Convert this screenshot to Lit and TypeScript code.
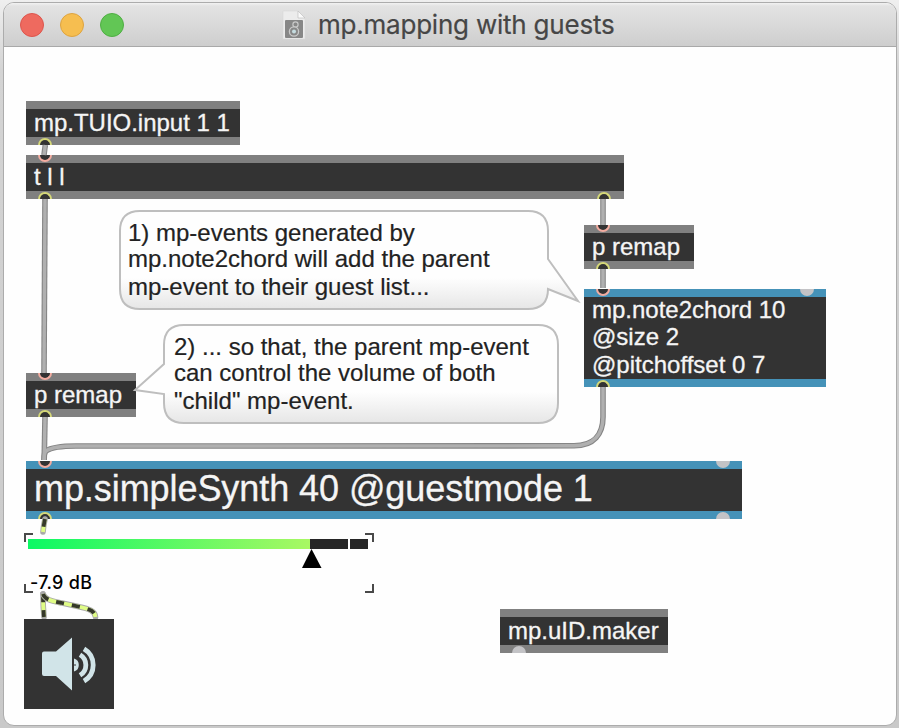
import { LitElement, html, svg, css } from "lit";
import { customElement, property } from "lit/decorators.js";
import { classMap } from "lit/directives/class-map.js";

interface Port { x: number; kind: "in" | "out" | "idle"; side: "top" | "bottom"; }
interface PatchBox {
  x: number; y: number; w: number; h: number;
  lines: string[]; tone: "gray" | "blue"; size?: "large"; ports: Port[]; spacing?: number;
}

const boxes: PatchBox[] = [
  { x: 26, y: 101, w: 214, h: 44, lines: ["mp.TUIO.input 1 1"], tone: "gray", spacing: -0.02,
    ports: [{ x: 19, kind: "out", side: "bottom" }] },
  { x: 26, y: 155, w: 598, h: 44, lines: ["t l l"], tone: "gray",
    ports: [{ x: 19, kind: "in", side: "top" }, { x: 19, kind: "out", side: "bottom" }, { x: 578, kind: "out", side: "bottom" }] },
  { x: 584, y: 225, w: 110, h: 44, lines: ["p remap"], tone: "gray",
    ports: [{ x: 19, kind: "in", side: "top" }, { x: 19, kind: "out", side: "bottom" }] },
  { x: 584, y: 289, w: 242, h: 98, lines: ["mp.note2chord 10", "@size 2", "@pitchoffset 0 7"], tone: "blue",
    ports: [{ x: 19, kind: "in", side: "top" }, { x: 223, kind: "idle", side: "top" }, { x: 19, kind: "out", side: "bottom" }] },
  { x: 26, y: 373, w: 110, h: 44, lines: ["p remap"], tone: "gray",
    ports: [{ x: 19, kind: "in", side: "top" }, { x: 19, kind: "out", side: "bottom" }] },
  { x: 26, y: 461, w: 716, h: 58, lines: ["mp.simpleSynth 40 @guestmode 1"], tone: "blue", size: "large", spacing: -0.07,
    ports: [{ x: 19, kind: "in", side: "top" }, { x: 697, kind: "idle", side: "top" },
            { x: 19, kind: "out", side: "bottom" }, { x: 697, kind: "idle", side: "bottom" }] },
  { x: 500, y: 609, w: 168, h: 44, lines: ["mp.uID.maker"], tone: "gray",
    ports: [{ x: 19, kind: "idle", side: "bottom" }] },
];

const cords = [
  "M45.3 145 L44 155",
  "M45 199 L44 373",
  "M603 199 V225",
  "M603 269 V288",
  "M603 387 V417 C603 434 594 445.800 574 445.800 L76 446 Q53 446 46 451 Q44 453 44 460",
  "M45 417 L44.2 460",
];
const signals = [
  "M45 519 Q43.6 525 43 532",
  "M43 594 Q43 606 44 617",
  "M43 594 C45 600 52 601 62 603 L78 606.500 C90 609 95 611 95.500 617",
];

@customElement("patch-box")
class PatchBoxElement extends LitElement {
  @property({ attribute: false }) box!: PatchBox;
  static styles = css`
    :host { display: block; height: 100%; }
    .box { position: relative; box-sizing: border-box; height: 100%; background: #333; color: #f5f5f5;
      border: solid #808080; border-width: 8px 0; padding: 0 0 2px 8px; display: flex; flex-direction: column;
      justify-content: center; font: 24px/27px "Liberation Sans", Arial, sans-serif; white-space: pre;
      -webkit-text-stroke: 0.3px #f5f5f5; }
    .line:not(:last-child):first-child { line-height: 26px; }
    .line:nth-child(3) { margin: 1px 0 -1px; }
    .blue { border-color: #4592b8; }
    .large { font-size: 36px; line-height: 40px; }
    .port { position: absolute; width: 14px; height: 7px; margin-left: -7px; box-sizing: border-box; background: #333; }
    .top { top: -8px; border-radius: 0 0 7px 7px; }
    .bottom { bottom: -8px; border-radius: 7px 7px 0 0; }
    .in { border: 2px solid #f3aca0; border-top: 0; }
    .out { border: 2px solid #d5d878; border-bottom: 0; }
    .idle { background: #c3c3c6; }
  `;
  render() {
    const b = this.box;
    return html`<div class=${classMap({ box: true, blue: b.tone === "blue", large: b.size === "large" })}
        style="letter-spacing:${b.spacing ?? 0}px">
      <div>${b.lines.map((l) => html`<div class="line">${l}</div>`)}</div>
      ${b.ports.map((p) => html`<i class="port ${p.kind} ${p.side}" style="left:${p.x}px"></i>`)}
    </div>`;
  }
}

@customElement("app-root")
class AppRoot extends LitElement {
  static styles = css`
    :host { display: block; position: relative; width: 899px; height: 728px; overflow: hidden; box-sizing: border-box;
      padding: 2px 2px 2px 3px; background: linear-gradient(#efefef, #d4d4d4 70px, #c9c9c9);
      font-family: "Liberation Sans", Arial, sans-serif; }
    .window { box-sizing: border-box; height: 724px; border: 1px solid #acacac; border-radius: 11px; overflow: hidden;
      background: #fefefe; display: flex; flex-direction: column; }
    .bar { box-sizing: border-box; height: 44px; flex: none; display: flex; align-items: center;
      padding-left: 16px; gap: 16px; border-bottom: 1px solid #a9a9a9;
      background: linear-gradient(#f2f2f2, #e3e3e3 3px, #cecece); }
    .light { width: 24px; height: 24px; box-sizing: border-box; border-radius: 50%; border: 1px solid #dc554d; background: #ee6a5f; }
    .amber { background: #f6be50; border-color: #dda340; }
    .green { background: #62c655; border-color: #4fae43; }
    .doc { width: 24px; height: 30px; margin-left: 142px; }
    .title { margin-left: -4px; padding-top: 1px; font: 26px/32px Inter, sans-serif; color: #464646;
      letter-spacing: -0.22px; white-space: pre; -webkit-text-stroke: 0.2px #464646; }
    .canvas, .node, .bubble { position: absolute; }
    .canvas { left: 0; top: 0; width: 899px; height: 728px; pointer-events: none; }
    .bubble { font-size: 24px; line-height: 27px; color: #222; white-space: pre; -webkit-text-stroke: 0.2px #222; }
    .bubble .first { line-height: 26px; }
    .bubble .middle { margin: -1px 0 1px; }
    .bubble .last { line-height: 28px; }
    .one { left: 128px; top: 220px; }
    .two { left: 174px; top: 334px; }
    .meter { position: absolute; left: 24px; top: 533px; width: 350px; height: 60px; box-sizing: border-box; padding: 6px 6px 0 4px; }
    .level { height: 10px; display: flex; gap: 2px; }
    .fill { width: 282px; background: linear-gradient(90deg, #0bf964, #a9f863); }
    .rest { width: 38px; margin-left: -2px; background: #262626; }
    .clip { width: 18px; background: #262626; }
    .db { position: absolute; left: 6px; top: 39px; font: 500 18px/22px Inter, sans-serif; color: #000; white-space: pre; letter-spacing: 0.3px; }
    .speaker { position: absolute; left: 24px; top: 619px; width: 90px; height: 90px; background: #333; }
    .speaker svg { display: block; }
  `;
  render() {
    return html`
      <div class="window">
        <div class="bar">
          <span class="light"></span><span class="light amber"></span><span class="light green"></span>
          <svg class="doc" viewBox="0 0 24 30">
            <path d="M1 1H16L23 8V29H1Z" fill="#ececec" stroke="#d9d9d9" stroke-width=".6" />
            <path d="M16 1V8H23Z" fill="#fafafa" stroke="#bbb" stroke-width=".6" />
            <rect x="3" y="10" width="18" height="18" rx="1" fill="#878787" />
            <circle cx="13.5" cy="14.5" r="2.6" fill="none" stroke="#c9c9c9" stroke-width="1.2" />
            <circle cx="12" cy="21.5" r="4.6" fill="#878787" stroke="#c9c9c9" stroke-width="1.3" />
            <circle cx="12" cy="21.5" r="2" fill="#c6dce0" />
          </svg>
          <span class="title">mp.mapping with guests</span>
        </div>
      </div>
      ${boxes.map((b) => html`<div class="node" style="left:${b.x}px;top:${b.y}px;width:${b.w}px;height:${b.h}px">
        <patch-box .box=${b}></patch-box></div>`)}
      <div class="meter">
        <div class="level"><i class="fill"></i><i class="rest"></i><i class="clip"></i></div>
        <span class="db">-7.9 dB</span>
      </div>
      <svg class="canvas" viewBox="0 0 899 728" fill="none">
        <defs>
          <linearGradient id="bubble" x1="0" y1="0" x2="0" y2="1">
            <stop offset=".68" stop-color="#fefefe" /><stop offset="1" stop-color="#e6e6e6" />
          </linearGradient>
        </defs>
        ${cords.map((d) => svg`<path d=${d} stroke="#858585" stroke-width="5.6" />`)}
        ${cords.map((d) => svg`<path d=${d} stroke="#b0b0b0" stroke-width="3.4" />`)}
        ${signals.map((d) => svg`<path d=${d} stroke="#a9a9a9" stroke-width="5.6" stroke-linecap="round" />
          <path d=${d} stroke="#dffc85" stroke-width="3.8" />
          <path d=${d} stroke="#35382a" stroke-width="3.8" stroke-dasharray="8 8" />`)}
        <g fill="url(#bubble)" stroke="#bebebe" stroke-width="2">
          <path d="M140 211H528Q548 211 548 231V259L578 301L548 289Q548 309 528 309H140Q120 309 120 289V231Q120 211 140 211Z" />
          <path d="M184 325H538Q558 325 558 345V403Q558 423 538 423H184Q164 423 164 403V394L135 390L164 364V345Q164 325 184 325Z" />
        </g>
        <path d="M25 542V534H33M365 534H373V542M25 584V592H33M365 592H373V584" stroke="#494949" stroke-width="2" />
        <path d="M302 568L311.5 549L321.5 568Z" fill="#000" />
      </svg>
      <div class="speaker">
        <svg width="90" height="90" viewBox="24 619 90 90" fill="none">
          <path d="M44 651.5H56L72 637.5V690.5L56 676H44Q42 676 42 674V653.5Q42 651.5 44 651.5Z" fill="#d1e4e8" />
          <path d="M74 658.5A6.800 6.800 0 0 1 74 671.500V665.500H76V664.500H74Z" fill="#d1e4e8" />
          <path d="M80 654.700A12 12 0 0 1 80 675.300M84 648.900A18.700 18.700 0 0 1 84 681.100" stroke="#d1e4e8" stroke-width="4.800" />
        </svg>
      </div>
      <div class="bubble one"><div class="first">1) mp-events generated by</div><div class="middle">mp.note2chord will add the parent</div><div class="last">mp-event to their guest list...</div></div>
      <div class="bubble two"><div class="first">2) ... so that, the parent mp-event</div><div class="middle">can control the volume of both</div><div class="last">"child" mp-event.</div></div>
    `;
  }
}
